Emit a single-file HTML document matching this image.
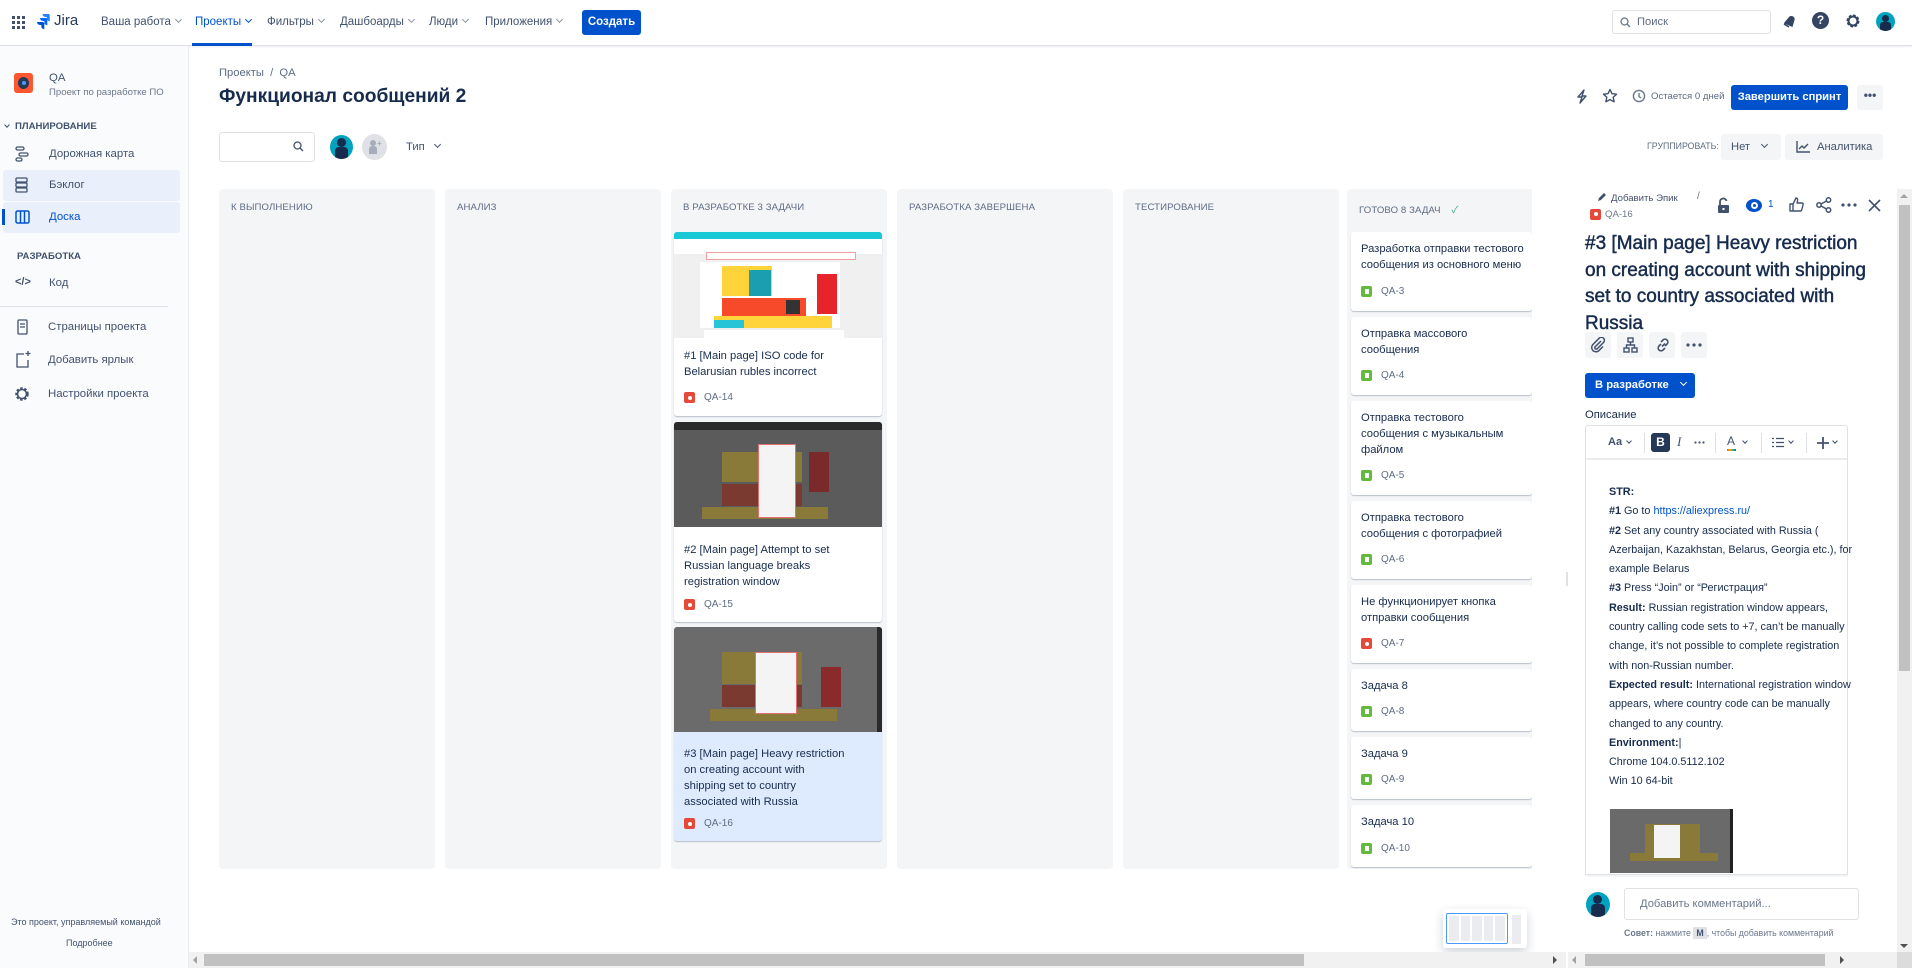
<!DOCTYPE html>
<html><head><meta charset="utf-8">
<style>
*{box-sizing:border-box;margin:0;padding:0}
body{width:1912px;height:968px;overflow:hidden;background:#fff;font-family:"Liberation Sans","Noto Sans CJK SC",sans-serif;color:#172b4d;position:relative;font-size:11.2px}
.a{position:absolute;white-space:nowrap}
.nav{font-size:11.5px;color:#42526e;top:16px}
.chev{display:inline-block;width:5px;height:5px;border-right:1.2px solid #8993a4;border-bottom:1.2px solid #8993a4;transform:rotate(45deg);margin-left:5px;position:relative;top:-3px}
.ch2{position:absolute;width:4px;height:4px;border-right:1.2px solid #42526e;border-bottom:1.2px solid #42526e;transform:rotate(45deg)}
.side{font-size:11.4px;color:#42526e}
.col{position:absolute;top:189px;width:216px;height:680px;background:#f4f5f7;border-radius:4px}
.ch{position:absolute;left:12px;top:13px;font-size:9.6px;color:#5e6c84;text-transform:uppercase;letter-spacing:.1px}
.card{position:absolute;background:#fff;border-radius:3px;box-shadow:0 1px 1px rgba(9,30,66,.25)}
.ct{position:absolute;left:10px;font-size:11.2px;line-height:16px;color:#172b4d;white-space:nowrap}
.key{position:absolute;left:10px;font-size:10px;color:#5e6c84;display:flex;align-items:center;gap:9px}
.bug{width:11px;height:11px;background:#e5493a;border-radius:2px;position:relative}
.bug:after{content:"";position:absolute;left:3.5px;top:3.5px;width:4px;height:4px;border-radius:50%;background:#fff}
.story{width:11px;height:11px;background:#63ba3c;border-radius:2px;position:relative}
.story:after{content:"";position:absolute;left:3.5px;top:2.5px;width:4px;height:5px;background:#fff}
.ib{position:absolute;width:26px;height:26px;background:#f4f5f7;border-radius:3px}
.desc{font-size:10.8px;line-height:19.3px;color:#172b4d;white-space:nowrap}
</style></head><body>

<!-- top nav -->
<div class="a" style="left:0;top:0;width:1912px;height:46px;border-bottom:1px solid #dfe1e6;box-shadow:0 1px 2px rgba(9,30,66,.08)"></div>
<svg class="a" style="left:12px;top:16px" width="13" height="13"><g fill="#42526e"><rect x="0" y="0" width="3" height="3"/><rect x="5" y="0" width="3" height="3"/><rect x="10" y="0" width="3" height="3"/><rect x="0" y="5" width="3" height="3"/><rect x="5" y="5" width="3" height="3"/><rect x="10" y="5" width="3" height="3"/><rect x="0" y="10" width="3" height="3"/><rect x="5" y="10" width="3" height="3"/><rect x="10" y="10" width="3" height="3"/></g></svg>
<svg class="a" style="left:37px;top:14px" width="14" height="16"><path d="M13 0H6.5a3 3 0 0 0 3 3h1.3v1.3a3 3 0 0 0 3 3V1z" fill="#2684ff" transform="translate(-1 0)"/><path d="M9.5 4H3a3 3 0 0 0 3 3h1.3v1.3a3 3 0 0 0 3 3V5z" fill="#0065ff"/><path d="M6 8H0a3 3 0 0 0 3 3h1.3v1.3a3 3 0 0 0 3 3V9z" fill="#0052cc"/></svg>
<div class="a" style="left:54px;top:12px;font-size:15px;color:#253858">Jira</div>
<div class="a nav" style="left:101px">Ваша работа<span class="chev"></span></div>
<div class="a nav" style="left:195px;color:#0052cc">Проекты<span class="chev" style="border-color:#0052cc"></span></div>
<div class="a" style="left:192px;top:43px;width:60px;height:3px;background:#0052cc"></div>
<div class="a nav" style="left:267px">Фильтры<span class="chev"></span></div>
<div class="a nav" style="left:340px">Дашбоарды<span class="chev"></span></div>
<div class="a nav" style="left:429px">Люди<span class="chev"></span></div>
<div class="a nav" style="left:485px">Приложения<span class="chev"></span></div>
<div class="a" style="left:582px;top:10px;width:59px;height:25px;background:#0052cc;border-radius:3px;color:#fff;font-size:11.5px;font-weight:bold;text-align:center;line-height:25px">Создать</div>
<div class="a" style="left:1612px;top:10px;width:159px;height:24px;border:1px solid #dfe1e6;border-radius:3px"></div>
<svg class="a" style="left:1620px;top:17px" width="11" height="11"><circle cx="4.5" cy="4.5" r="3.5" stroke="#6b778c" stroke-width="1.3" fill="none"/><path d="M7 7l3 3" stroke="#6b778c" stroke-width="1.3"/></svg>
<div class="a" style="left:1637px;top:16px;font-size:11.2px;color:#5e6c84">Поиск</div>
<svg class="a" style="left:1782px;top:14px" width="15" height="15"><path d="M3 9l5-6q3-1 4 2l-2 7z M2 10l5 3" fill="#344563" stroke="#344563" stroke-width="1.5"/></svg>
<div class="a" style="left:1812px;top:12px;width:17px;height:17px;border-radius:50%;background:#344563;color:#fff;font-size:12px;font-weight:bold;text-align:center;line-height:17px">?</div>
<svg class="a" style="left:1845px;top:13px" width="16" height="16" viewBox="0 0 16 16"><circle cx="8" cy="8" r="5" fill="none" stroke="#344563" stroke-width="3" stroke-dasharray="2.4 1.5"/><circle cx="8" cy="8" r="4.5" fill="none" stroke="#344563" stroke-width="2"/></svg>
<div class="a" style="left:1876px;top:12px;width:19px;height:19px;border-radius:50%;background:#00a3bf;overflow:hidden"><div style="position:absolute;left:6px;top:3px;width:7px;height:7px;border-radius:50%;background:#172b4d"></div><div style="position:absolute;left:4px;top:10px;width:11px;height:9px;border-radius:3px 3px 0 0;background:#172b4d"></div></div>

<!-- sidebar -->
<div class="a" style="left:0;top:46px;width:189px;height:922px;background:#fafbfc;border-right:1px solid #ebecf0"></div>
<div class="a" style="left:14px;top:73px;width:19px;height:20px;background:#ff5630;border-radius:3px"><div style="position:absolute;left:4px;top:4px;width:11px;height:12px;border-radius:50%;background:#253858"></div><div style="position:absolute;left:8px;top:8px;width:4px;height:4px;border-radius:50%;background:#4c9aff"></div></div>
<div class="a" style="left:49px;top:72px;font-size:11.4px;color:#42526e">QA</div>
<div class="a" style="left:49px;top:87px;font-size:9.6px;color:#6b778c">Проект по разработке ПО</div>
<div class="a" style="left:5px;top:121px;font-size:9.6px;font-weight:bold;color:#42526e"><span class="chev" style="margin:0 6px 0 0;width:4px;height:4px;border-color:#42526e;top:-2px"></span>ПЛАНИРОВАНИЕ</div>
<svg class="a" style="left:15px;top:146px" width="14" height="16"><rect x="1" y="1" width="8" height="3" rx="1.5" stroke="#42526e" fill="none" stroke-width="1.3"/><rect x="4" y="7" width="9" height="3" rx="1.5" stroke="#42526e" fill="none" stroke-width="1.3"/><rect x="1" y="12" width="6" height="3" rx="1.5" stroke="#42526e" fill="none" stroke-width="1.3"/></svg>
<div class="a side" style="left:49px;top:148px">Дорожная карта</div>
<div class="a" style="left:3px;top:170px;width:177px;height:31px;background:#e9f0fc;border-radius:3px"></div>
<svg class="a" style="left:15px;top:177px" width="14" height="16"><rect x="1" y="1" width="11" height="4" rx="1" stroke="#42526e" fill="none" stroke-width="1.3"/><rect x="1" y="6" width="11" height="4" rx="1" stroke="#42526e" fill="none" stroke-width="1.3"/><rect x="1" y="11" width="11" height="4" rx="1" stroke="#42526e" fill="none" stroke-width="1.3"/></svg>
<div class="a side" style="left:49px;top:179px">Бэклог</div>
<div class="a" style="left:3px;top:202px;width:177px;height:31px;background:#e9f0fc;border-radius:3px"></div>
<div class="a" style="left:2px;top:209px;width:3px;height:16px;background:#0052cc"></div>
<svg class="a" style="left:15px;top:210px" width="15" height="14"><rect x="1" y="1" width="13" height="12" rx="1.5" stroke="#0052cc" fill="none" stroke-width="1.5"/><path d="M5.5 1v12M9.5 1v12" stroke="#0052cc" stroke-width="1.5"/></svg>
<div class="a side" style="left:49px;top:211px;color:#0052cc">Доска</div>
<div class="a" style="left:17px;top:251px;font-size:9.6px;font-weight:bold;color:#42526e">РАЗРАБОТКА</div>
<div class="a" style="left:15px;top:276px;font-size:11px;color:#42526e;font-weight:bold">&lt;/&gt;</div>
<div class="a side" style="left:49px;top:277px">Код</div>
<div class="a" style="left:0;top:306px;width:168px;height:1px;background:#dfe1e6"></div>
<svg class="a" style="left:17px;top:319px" width="11" height="16"><rect x="1" y="1" width="9" height="14" rx="1" stroke="#42526e" fill="none" stroke-width="1.3"/><path d="M3 5h5M3 8h5" stroke="#42526e" stroke-width="1.2"/></svg>
<div class="a side" style="left:48px;top:321px">Страницы проекта</div>
<svg class="a" style="left:16px;top:351px" width="15" height="17"><path d="M8 3H1v13h11V9" stroke="#42526e" fill="none" stroke-width="1.3"/><path d="M12 0v5M9.5 2.5h5" stroke="#42526e" stroke-width="1.3"/></svg>
<div class="a side" style="left:48px;top:354px">Добавить ярлык</div>
<svg class="a" style="left:14px;top:386px" width="16" height="16"><circle cx="8" cy="8" r="5.5" fill="none" stroke="#42526e" stroke-width="2.5" stroke-dasharray="2.4 1.6"/><circle cx="8" cy="8" r="4.5" fill="none" stroke="#42526e" stroke-width="1.6"/></svg>
<div class="a side" style="left:48px;top:388px">Настройки проекта</div>
<div class="a" style="left:11px;top:917px;font-size:9px;color:#42526e">Это проект, управляемый командой</div>
<div class="a" style="left:66px;top:938px;font-size:9px;color:#42526e">Подробнее</div>

<!-- main header -->
<div class="a" style="left:219px;top:67px;font-size:11.2px;color:#5e6c84">Проекты &nbsp;/&nbsp; QA</div>
<div class="a" style="left:219px;top:86px;font-size:19.2px;font-weight:bold;color:#172b4d">Функционал сообщений 2</div>
<svg class="a" style="left:1576px;top:89px" width="12" height="15"><path d="M8 1L2 8h4l-2 6 6-7H6z" stroke="#42526e" fill="none" stroke-width="1.4" stroke-linejoin="round"/></svg>
<svg class="a" style="left:1602px;top:88px" width="16" height="16"><path d="M8 1.5l2 4.2 4.5.5-3.3 3.1.9 4.5L8 11.6l-4.1 2.2.9-4.5L1.5 6.2 6 5.7z" stroke="#42526e" fill="none" stroke-width="1.4" stroke-linejoin="round"/></svg>
<svg class="a" style="left:1632px;top:89px" width="14" height="14"><circle cx="7" cy="7" r="5.6" stroke="#6b778c" fill="none" stroke-width="1.4"/><path d="M7 4v3.5l2 1.5" stroke="#6b778c" fill="none" stroke-width="1.4"/></svg>
<div class="a" style="left:1651px;top:91px;font-size:9.6px;color:#5e6c84">Остается 0 дней</div>
<div class="a" style="left:1731px;top:85px;width:117px;height:25px;background:#0052cc;border-radius:3px;color:#fff;font-size:11.2px;font-weight:bold;text-align:center;line-height:25px">Завершить спринт</div>
<div class="a" style="left:1857px;top:85px;width:26px;height:25px;background:#f4f5f7;border-radius:3px;color:#42526e;font-size:12px;font-weight:bold;text-align:center;line-height:21px">•••</div>

<div class="a" style="left:219px;top:132px;width:96px;height:30px;border:1.5px solid #dfe1e6;border-radius:3px;background:#fff"></div>
<svg class="a" style="left:293px;top:141px" width="11" height="11"><circle cx="4.5" cy="4.5" r="3.5" stroke="#42526e" stroke-width="1.3" fill="none"/><path d="M7 7l3 3" stroke="#42526e" stroke-width="1.3"/></svg>
<div class="a" style="left:329px;top:134px;width:25px;height:26px;border-radius:50%;background:#00a3bf;overflow:hidden;border:1.5px solid #fff"><div style="position:absolute;left:7px;top:3px;width:9px;height:9px;border-radius:50%;background:#172b4d"></div><div style="position:absolute;left:5px;top:12px;width:13px;height:12px;border-radius:4px 4px 0 0;background:#172b4d"></div></div>
<div class="a" style="left:362px;top:134px;width:25px;height:26px;border-radius:50%;background:#dfe1e6"><div style="position:absolute;left:8px;top:6px;width:6px;height:6px;border-radius:50%;background:#a5adba"></div><div style="position:absolute;left:7px;top:12px;width:8px;height:8px;border-radius:3px 3px 0 0;background:#a5adba"></div><div style="position:absolute;left:15px;top:5px;font-size:8px;color:#a5adba;font-weight:bold">+</div></div>
<div class="a" style="left:406px;top:141px;font-size:11.2px;color:#42526e">Тип<span class="chev" style="margin-left:10px;border-color:#42526e"></span></div>
<div class="a" style="left:1647px;top:141px;font-size:8.8px;color:#5e6c84">ГРУППИРОВАТЬ:</div>
<div class="a" style="left:1721px;top:134px;width:60px;height:26px;background:#f4f5f7;border-radius:3px;font-size:11.2px;color:#42526e;line-height:26px;padding-left:10px">Нет<span class="chev" style="margin-left:12px;border-color:#42526e"></span></div>
<div class="a" style="left:1785px;top:134px;width:98px;height:26px;background:#f4f5f7;border-radius:3px;font-size:11.2px;color:#42526e;line-height:26px;padding-left:32px">Аналитика</div>
<svg class="a" style="left:1796px;top:141px" width="14" height="12"><path d="M1 0v11h13" stroke="#42526e" fill="none" stroke-width="1.4"/><path d="M3 8l3-3 2 2 4-4" stroke="#42526e" fill="none" stroke-width="1.4"/></svg>

<!-- columns -->
<div class="col" style="left:219px"><div class="ch">К выполнению</div></div>
<div class="col" style="left:445px"><div class="ch">Анализ</div></div>
<div class="col" style="left:671px"><div class="ch">В разработке 3 задачи</div>
  <div class="card" style="left:3px;top:43px;width:208px;height:184px;overflow:hidden">
    <div style="position:absolute;left:0;top:0;width:208px;height:106px;background:#f0f0f0">
      <div style="position:absolute;left:0;top:0;width:208px;height:7px;background:#18c8d4"></div>
      <div style="position:absolute;left:0;top:7px;width:208px;height:15px;background:#fff"></div>
      <div style="position:absolute;left:32px;top:20px;width:150px;height:8px;border:1px solid #f0a0a0;background:#fff"></div>
      <div style="position:absolute;left:26px;top:30px;width:140px;height:66px;background:#fff"></div>
      <div style="position:absolute;left:48px;top:34px;width:50px;height:30px;background:#ffd43b"></div>
      <div style="position:absolute;left:75px;top:38px;width:22px;height:26px;background:#1b9fb0"></div>
      <div style="position:absolute;left:48px;top:66px;width:84px;height:20px;background:#f64a2b"></div>
      <div style="position:absolute;left:112px;top:68px;width:14px;height:14px;background:#333"></div>
      <div style="position:absolute;left:143px;top:42px;width:20px;height:40px;background:#e8242b"></div>
      <div style="position:absolute;left:40px;top:84px;width:118px;height:12px;background:#ffd43b"></div>
      <div style="position:absolute;left:40px;top:88px;width:30px;height:8px;background:#27c3d6"></div>
      <div style="position:absolute;left:30px;top:98px;width:140px;height:8px;background:#fff"></div>
    </div>
    <div class="ct" style="top:116px">#1 [Main page] ISO code for<br>Belarusian rubles incorrect</div>
    <div class="key" style="top:160px"><span class="bug"></span>QA-14</div>
  </div>
  <div class="card" style="left:3px;top:233px;width:208px;height:200px;overflow:hidden">
    <div style="position:absolute;left:0;top:0;width:208px;height:105px;background:#5b5b5b">
      <div style="position:absolute;left:0;top:0;width:208px;height:8px;background:#2a2a2a"></div>
      <div style="position:absolute;left:48px;top:30px;width:80px;height:30px;background:#8a7a3a"></div>
      <div style="position:absolute;left:48px;top:62px;width:80px;height:22px;background:#7a3a30"></div>
      <div style="position:absolute;left:28px;top:85px;width:126px;height:12px;background:#8a7a3a"></div>
      <div style="position:absolute;left:135px;top:30px;width:20px;height:40px;background:#7a2a2a"></div>
      <div style="position:absolute;left:84px;top:22px;width:38px;height:74px;background:#f4f4f4;border:1px solid #e07070"></div>
    </div>
    <div class="ct" style="top:120px">#2 [Main page] Attempt to set<br>Russian language breaks<br>registration window</div>
    <div class="key" style="top:177px"><span class="bug"></span>QA-15</div>
  </div>
  <div class="card" style="left:3px;top:438px;width:208px;height:214px;overflow:hidden;background:#deebff">
    <div style="position:absolute;left:0;top:0;width:208px;height:105px;background:#6b6b6b;overflow:hidden">
      <div style="position:absolute;left:203px;top:0;width:5px;height:105px;background:#2a2a2a"></div>
      <div style="position:absolute;left:48px;top:25px;width:80px;height:32px;background:#8a7a3a"></div>
      <div style="position:absolute;left:48px;top:58px;width:80px;height:22px;background:#7a3a30"></div>
      <div style="position:absolute;left:36px;top:82px;width:127px;height:12px;background:#8a7a3a"></div>
      <div style="position:absolute;left:147px;top:40px;width:20px;height:40px;background:#8a2a2a"></div>
      <div style="position:absolute;left:81px;top:25px;width:42px;height:62px;background:#f4f4f4;border:1px solid #e07070"></div>
    </div>
    <div class="ct" style="top:119px">#3 [Main page] Heavy restriction<br>on creating account with<br>shipping set to country<br>associated with Russia</div>
    <div class="key" style="top:191px"><span class="bug"></span>QA-16</div>
  </div>
</div>
<div class="col" style="left:897px"><div class="ch">Разработка завершена</div></div>
<div class="col" style="left:1123px"><div class="ch">Тестирование</div></div>
<div class="col" style="left:1347px;width:185px;border-radius:4px 0 0 4px;overflow:hidden"><div class="ch">Готово 8 задач <span style="color:#36b37e;margin-left:8px">✓</span></div>
  <div class="card" style="left:4px;top:43px;width:181px;height:79px"><div class="ct" style="top:9px">Разработка отправки тестового<br>сообщения из основного меню</div><div class="key" style="top:54px"><span class="story"></span>QA-3</div></div>
  <div class="card" style="left:4px;top:128px;width:181px;height:78px"><div class="ct" style="top:9px">Отправка массового<br>сообщения</div><div class="key" style="top:53px"><span class="story"></span>QA-4</div></div>
  <div class="card" style="left:4px;top:212px;width:181px;height:94px"><div class="ct" style="top:9px">Отправка тестового<br>сообщения с музыкальным<br>файлом</div><div class="key" style="top:69px"><span class="story"></span>QA-5</div></div>
  <div class="card" style="left:4px;top:312px;width:181px;height:78px"><div class="ct" style="top:9px">Отправка тестового<br>сообщения с фотографией</div><div class="key" style="top:53px"><span class="story"></span>QA-6</div></div>
  <div class="card" style="left:4px;top:396px;width:181px;height:78px"><div class="ct" style="top:9px">Не функционирует кнопка<br>отправки сообщения</div><div class="key" style="top:53px"><span class="bug"></span>QA-7</div></div>
  <div class="card" style="left:4px;top:480px;width:181px;height:62px"><div class="ct" style="top:9px">Задача 8</div><div class="key" style="top:37px"><span class="story"></span>QA-8</div></div>
  <div class="card" style="left:4px;top:548px;width:181px;height:62px"><div class="ct" style="top:9px">Задача 9</div><div class="key" style="top:37px"><span class="story"></span>QA-9</div></div>
  <div class="card" style="left:4px;top:616px;width:181px;height:62px"><div class="ct" style="top:9px">Задача 10</div><div class="key" style="top:38px"><span class="story"></span>QA-10</div></div>
</div>

<!-- floating mini map -->
<div class="a" style="left:1443px;top:909px;width:84px;height:39px;background:#fff;border-radius:3px;box-shadow:0 4px 10px rgba(9,30,66,.2)"></div>
<div class="a" style="left:1446px;top:913px;width:62px;height:31px;border:1.5px solid #4c9aff;border-radius:2px;display:flex;gap:2px;padding:2px"><div style="flex:1;background:#ebecf0"></div><div style="flex:1;background:#ebecf0"></div><div style="flex:1;background:#ebecf0"></div><div style="flex:1;background:#ebecf0"></div><div style="flex:1;background:#ebecf0"></div></div>
<div class="a" style="left:1512px;top:915px;width:9px;height:29px;background:#ebecf0"></div>

<!-- detail panel -->
<div class="a" style="left:1566px;top:572px;width:1.5px;height:14px;background:#dfe1e6"></div>
<svg class="a" style="left:1597px;top:193px" width="9" height="9"><path d="M1 8l1-3 5-5 2 2-5 5z" fill="#42526e"/></svg>
<div class="a" style="left:1611px;top:193px;font-size:9.6px;color:#42526e">Добавить Эпик</div>
<div class="a" style="left:1697px;top:191px;font-size:10px;color:#6b778c">/</div>
<div class="a" style="left:1590px;top:208px"><span class="bug" style="display:inline-block;vertical-align:middle"></span><span style="font-size:9.6px;color:#6b778c;margin-left:4px;vertical-align:middle">QA-16</span></div>
<svg class="a" style="left:1717px;top:197px" width="13" height="17"><path d="M3 8V4.5a3.3 3.3 0 0 1 6.5-.5" stroke="#42526e" fill="none" stroke-width="1.8"/><rect x="1" y="8" width="11" height="8" rx="1" fill="#42526e"/><rect x="5.5" y="11" width="2" height="2" fill="#fff"/></svg>
<div class="a" style="left:1746px;top:199px;width:16px;height:13px;border-radius:50%;background:#0052cc"><div style="position:absolute;left:4.5px;top:3px;width:7px;height:7px;border-radius:50%;border:2px solid #fff"></div></div>
<div class="a" style="left:1768px;top:199px;font-size:10px;color:#0052cc">1</div>
<svg class="a" style="left:1789px;top:197px" width="15" height="15"><path d="M1 7h3v7H1zM4 7l3-6q2 0 1.5 3L8 6h5q1.5 0 1 2l-1.3 5q-.3 1-1.5 1H4" stroke="#42526e" fill="none" stroke-width="1.4" stroke-linejoin="round"/></svg>
<svg class="a" style="left:1816px;top:197px" width="16" height="16"><circle cx="12.5" cy="3" r="2.2" stroke="#42526e" fill="none" stroke-width="1.5"/><circle cx="3" cy="8" r="2.2" stroke="#42526e" fill="none" stroke-width="1.5"/><circle cx="12.5" cy="13" r="2.2" stroke="#42526e" fill="none" stroke-width="1.5"/><path d="M5 7l5.5-3M5 9l5.5 3" stroke="#42526e" stroke-width="1.5"/></svg>
<svg class="a" style="left:1841px;top:203px" width="16" height="4"><circle cx="2" cy="2" r="1.6" fill="#42526e"/><circle cx="8" cy="2" r="1.6" fill="#42526e"/><circle cx="14" cy="2" r="1.6" fill="#42526e"/></svg>
<svg class="a" style="left:1868px;top:199px" width="13" height="13"><path d="M1 1l11 11M12 1L1 12" stroke="#42526e" stroke-width="1.6"/></svg>
<div class="a" style="left:1585px;top:231px;font-size:19px;line-height:26.5px;color:#172b4d;-webkit-text-stroke:0.45px #172b4d">#3 [Main page] Heavy restriction<br>on creating account with shipping<br>set to country associated with<br>Russia</div>
<div class="ib" style="left:1585px;top:332px"></div><div class="ib" style="left:1617px;top:332px"></div><div class="ib" style="left:1649px;top:332px"></div><div class="ib" style="left:1681px;top:332px"></div>
<svg class="a" style="left:1590px;top:337px" width="16" height="16"><path d="M11 4l-6 6a1.5 1.5 0 0 0 2 2l6.5-6.5a3 3 0 0 0-4.3-4.3L2.5 8a4.3 4.3 0 0 0 6 6L13 9.5" stroke="#42526e" fill="none" stroke-width="1.5"/></svg>
<svg class="a" style="left:1623px;top:337px" width="15" height="16"><rect x="5" y="1" width="5" height="4" stroke="#42526e" fill="none" stroke-width="1.4"/><rect x="1" y="11" width="5" height="4" stroke="#42526e" fill="none" stroke-width="1.4"/><rect x="9" y="11" width="5" height="4" stroke="#42526e" fill="none" stroke-width="1.4"/><path d="M7.5 5v3M3.5 11V8h8v3" stroke="#42526e" fill="none" stroke-width="1.4"/></svg>
<svg class="a" style="left:1655px;top:337px" width="16" height="16"><path d="M7 9.5l3-3M6 5l2-2a2.8 2.8 0 0 1 4 4l-2 2M10 11l-2 2a2.8 2.8 0 0 1-4-4l2-2" stroke="#42526e" fill="none" stroke-width="1.6"/></svg>
<svg class="a" style="left:1686px;top:343px" width="16" height="4"><circle cx="2" cy="2" r="1.6" fill="#42526e"/><circle cx="8" cy="2" r="1.6" fill="#42526e"/><circle cx="14" cy="2" r="1.6" fill="#42526e"/></svg>
<div class="a" style="left:1585px;top:373px;width:110px;height:25px;background:#0052cc;border-radius:3px;color:#fff;font-size:11.2px;font-weight:bold;line-height:25px;padding-left:10px">В разработке<span class="chev" style="margin-left:12px;border-color:#fff"></span></div>
<div class="a" style="left:1585px;top:409px;font-size:11.2px;color:#172b4d">Описание</div>
<div class="a" style="left:1585px;top:425px;width:263px;height:450px;border:1px solid #dfe1e6;border-radius:3px 3px 0 0"></div>
<div class="a" style="left:1586px;top:458px;width:261px;height:2px;background:#ebecf0"></div>
<div class="a" style="left:1608px;top:436px;font-size:11px;font-weight:bold;color:#42526e">Aa</div>
<div class="ch2" style="left:1627px;top:439px"></div>
<div class="a" style="left:1644px;top:433px;width:1px;height:20px;background:#dfe1e6"></div>
<div class="a" style="left:1651px;top:433px;width:19px;height:19px;background:#253858;border-radius:3px;color:#fff;font-weight:bold;font-size:12px;text-align:center;line-height:19px">B</div>
<div class="a" style="left:1677px;top:434px;font-size:13px;font-style:italic;font-family:'Liberation Serif',serif;color:#42526e">I</div>
<svg class="a" style="left:1694px;top:441px" width="11" height="3"><circle cx="1.5" cy="1.5" r="1.1" fill="#42526e"/><circle cx="5.5" cy="1.5" r="1.1" fill="#42526e"/><circle cx="9.5" cy="1.5" r="1.1" fill="#42526e"/></svg>
<div class="a" style="left:1715px;top:433px;width:1px;height:20px;background:#dfe1e6"></div>
<div class="a" style="left:1727px;top:434px;font-size:12px;color:#42526e">A</div>
<div class="a" style="left:1727px;top:449px;width:9px;height:2px;background:linear-gradient(90deg,#ff5630,#ffab00,#36b37e,#0065ff)"></div>
<div class="ch2" style="left:1743px;top:439px"></div>
<div class="a" style="left:1761px;top:433px;width:1px;height:20px;background:#dfe1e6"></div>
<svg class="a" style="left:1772px;top:437px" width="12" height="11"><path d="M0 1.5h2M4 1.5h8M0 5.5h2M4 5.5h8M0 9.5h2M4 9.5h8" stroke="#42526e" stroke-width="1.2"/></svg>
<div class="ch2" style="left:1789px;top:439px"></div>
<div class="a" style="left:1806px;top:433px;width:1px;height:20px;background:#dfe1e6"></div>
<svg class="a" style="left:1817px;top:437px" width="12" height="12"><path d="M6 0v12M0 6h12" stroke="#42526e" stroke-width="1.8"/></svg>
<div class="ch2" style="left:1833px;top:439px"></div>

<div class="a desc" style="left:1609px;top:483px">
<b>STR:</b><br>
<b>#1</b> Go to <span style="color:#0052cc">https://aliexpress.ru/</span><br>
<b>#2</b> Set any country associated with Russia (<br>Azerbaijan, Kazakhstan, Belarus, Georgia etc.), for<br>example Belarus<br>
<b>#3</b> Press “Join” or “Регистрация”<br>
<b>Result:</b> Russian registration window appears,<br>country calling code sets to +7, can’t be manually<br>change, it’s not possible to complete registration<br>with non-Russian number.<br>
<b>Expected result:</b> International registration window<br>appears, where country code can be manually<br>changed to any country.<br>
<b>Environment:</b>|<br>Chrome 104.0.5112.102<br>Win 10 64-bit
</div>
<div class="a" style="left:1610px;top:809px;width:123px;height:64px;background:#6a6a6a;overflow:hidden">
  <div style="position:absolute;left:120px;top:0;width:3px;height:64px;background:#222"></div>
  <div style="position:absolute;left:35px;top:15px;width:55px;height:30px;background:#8a7a3a"></div>
  <div style="position:absolute;left:20px;top:44px;width:88px;height:8px;background:#8a7a3a"></div>
  <div style="position:absolute;left:44px;top:16px;width:26px;height:33px;background:#f4f4f4"></div>
</div>
<div class="a" style="left:1586px;top:875px;width:262px;height:2px;background:#f4f5f7"></div>

<div class="a" style="left:1586px;top:892px;width:24px;height:25px;border-radius:50%;background:#00a3bf;overflow:hidden"><div style="position:absolute;left:7px;top:3px;width:9px;height:9px;border-radius:50%;background:#172b4d"></div><div style="position:absolute;left:5px;top:12px;width:14px;height:13px;border-radius:4px 4px 0 0;background:#172b4d"></div></div>
<div class="a" style="left:1624px;top:888px;width:235px;height:32px;border:1px solid #dfe1e6;border-radius:3px;font-size:11.2px;color:#6b778c;line-height:30px;padding-left:15px">Добавить комментарий...</div>
<div class="a" style="left:1624px;top:928px;font-size:8.8px;color:#6b778c"><b>Совет:</b> нажмите <span style="background:#dfe1e6;padding:1px 3px;font-weight:bold;color:#42526e">M</span>, чтобы добавить комментарий</div>

<!-- scrollbars -->
<div class="a" style="left:1897px;top:189px;width:15px;height:765px;background:#f1f1f1"></div>
<div class="a" style="left:1899px;top:205px;width:11px;height:466px;background:#c1c1c1"></div>
<div class="a" style="left:1900px;top:194px;width:0;height:0;border-left:4px solid transparent;border-right:4px solid transparent;border-bottom:4px solid #a3a3a3"></div>
<div class="a" style="left:1900px;top:944px;width:0;height:0;border-left:4px solid transparent;border-right:4px solid transparent;border-top:4px solid #505050"></div>
<div class="a" style="left:189px;top:952px;width:1377px;height:16px;background:#f1f1f1"></div>
<div class="a" style="left:204px;top:954px;width:1100px;height:12px;background:#c1c1c1"></div>
<div class="a" style="left:1553px;top:956px;width:0;height:0;border-top:4px solid transparent;border-bottom:4px solid transparent;border-left:4px solid #505050"></div>
<div class="a" style="left:193px;top:956px;width:0;height:0;border-top:4px solid transparent;border-bottom:4px solid transparent;border-right:4px solid #a3a3a3"></div>
<div class="a" style="left:1568px;top:952px;width:329px;height:16px;background:#f1f1f1"></div>
<div class="a" style="left:1585px;top:954px;width:240px;height:12px;background:#c1c1c1"></div>
<div class="a" style="left:1572px;top:956px;width:0;height:0;border-top:4px solid transparent;border-bottom:4px solid transparent;border-right:4px solid #a3a3a3"></div>
<div class="a" style="left:1840px;top:956px;width:0;height:0;border-top:4px solid transparent;border-bottom:4px solid transparent;border-left:4px solid #505050"></div>
<div class="a" style="left:1897px;top:952px;width:15px;height:16px;background:#dcdcdc"></div>
</body></html>
